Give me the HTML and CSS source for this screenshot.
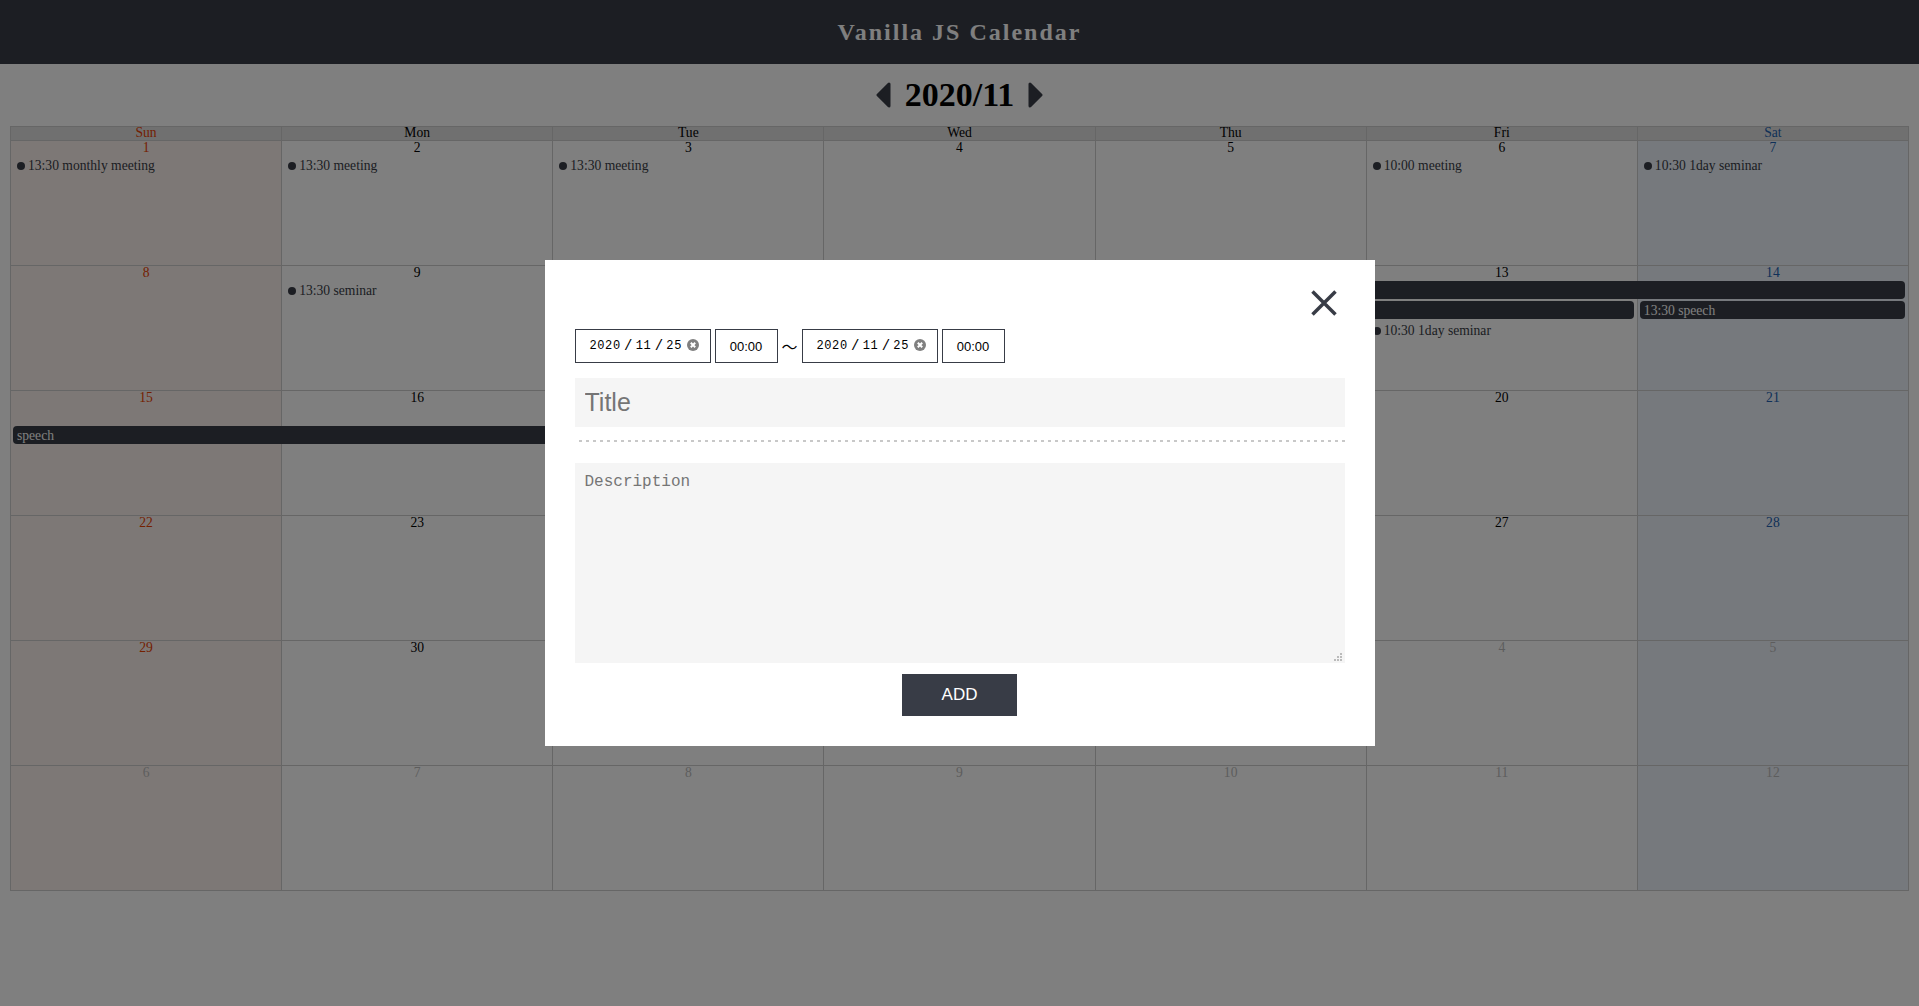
FILE: index.html
```html
<!DOCTYPE html>
<html>
<head>
<meta charset="utf-8"/>
<title>Vanilla JS Calendar</title>
<link rel="stylesheet" href="styles.css">
</head>
<body>

<header class="top"><h1>Vanilla JS Calendar</h1></header>

<div class="month-nav">
  <svg class="arrow" width="15" height="26" viewBox="0 0 15 26"><path d="M13 2 V24 L2 13 Z"/></svg>
  <h2>2020/11</h2>
  <svg class="arrow" width="15" height="26" viewBox="0 0 15 26"><path d="M2 2 V24 L13 13 Z"/></svg>
</div>

<div class="calendar">
  <div class="weekdays">
    <div class="sun">Sun</div><div>Mon</div><div>Tue</div><div>Wed</div><div>Thu</div><div>Fri</div><div class="sat">Sat</div>
  </div>

  <div class="week">
    <div class="day c1 sun">1</div><div class="day c2">2</div><div class="day c3">3</div><div class="day c4">4</div><div class="day c5">5</div><div class="day c6">6</div><div class="day c7 sat">7</div>
    <div class="event c1 s0"><i></i>13:30 monthly meeting</div>
    <div class="event c2 s0"><i></i>13:30 meeting</div>
    <div class="event c3 s0"><i></i>13:30 meeting</div>
    <div class="event c6 s0"><i></i>10:00 meeting</div>
    <div class="event c7 s0"><i></i>10:30 1day seminar</div>
  </div>

  <div class="week">
    <div class="day c1 sun">8</div><div class="day c2">9</div><div class="day c3">10</div><div class="day c4">11</div><div class="day c5">12</div><div class="day c6">13</div><div class="day c7 sat">14</div>
    <div class="event c2 s0"><i></i>13:30 seminar</div>
    <div class="bar c4-7 s0">speech</div>
    <div class="bar c4-6 s1">speech</div>
    <div class="bar c7 s1">13:30 speech</div>
    <div class="event c6 s2"><i></i>10:30 1day seminar</div>
  </div>

  <div class="week">
    <div class="day c1 sun">15</div><div class="day c2">16</div><div class="day c3">17</div><div class="day c4">18</div><div class="day c5">19</div><div class="day c6">20</div><div class="day c7 sat">21</div>
    <div class="bar c1-4 s1">speech</div>
  </div>

  <div class="week">
    <div class="day c1 sun">22</div><div class="day c2">23</div><div class="day c3">24</div><div class="day c4">25</div><div class="day c5">26</div><div class="day c6">27</div><div class="day c7 sat">28</div>
  </div>

  <div class="week">
    <div class="day c1 sun">29</div><div class="day c2">30</div><div class="day c3 other">1</div><div class="day c4 other">2</div><div class="day c5 other">3</div><div class="day c6 other">4</div><div class="day c7 sat other">5</div>
  </div>

  <div class="week">
    <div class="day c1 sun other">6</div><div class="day c2 other">7</div><div class="day c3 other">8</div><div class="day c4 other">9</div><div class="day c5 other">10</div><div class="day c6 other">11</div><div class="day c7 sat other">12</div>
  </div>
</div>

<div class="overlay">
  <form class="modal">
    <svg class="close" width="26" height="26" viewBox="0 0 26 26"><path d="M1.5 1.5 L24.5 24.5 M24.5 1.5 L1.5 24.5"/></svg>

    <div class="when">
      <div class="date"><span>2020</span><b>/</b><span>11</span><b>/</b><span>25</span>
        <svg width="12" height="12" viewBox="0 0 12 12"><circle cx="6" cy="6" r="6"/><path d="M3.8 3.8 L8.2 8.2 M8.2 3.8 L3.8 8.2"/></svg>
      </div>
      <input class="time" type="text" value="00:00">
      <span class="tilde">〜</span>
      <div class="date"><span>2020</span><b>/</b><span>11</span><b>/</b><span>25</span>
        <svg width="12" height="12" viewBox="0 0 12 12"><circle cx="6" cy="6" r="6"/><path d="M3.8 3.8 L8.2 8.2 M8.2 3.8 L3.8 8.2"/></svg>
      </div>
      <input class="time" type="text" value="00:00">
    </div>

    <input class="title" type="text" placeholder="Title">
    <hr/>
    <div class="desc-wrap">
      <textarea class="desc" placeholder="Description"></textarea>
      <svg class="grip" width="8" height="8" viewBox="0 0 8 8"><path d="M6 0h2v2h-2z M3 3h2v2h-2z M6 3h2v2h-2z M0 6h2v2h-2z M3 6h2v2h-2z M6 6h2v2h-2z"/></svg>
    </div>
    <button class="add" type="button">ADD</button>
  </form>
</div>

</body>
</html>
```

FILE: styles.css
```css
* {
   box-sizing: border-box;
}

body {
   margin: 0;
   background-color: white;
   font-family: "Liberation Serif", serif;
   font-size: 13.6px;
   color: black;
}

.top {
   height: 64px;
   background-color: #383c46;
   display: flex;
   align-items: center;
   justify-content: center;
}

.top h1 {
   margin: 0;
   font-size: 24px;
   letter-spacing: 2px;
   color: white;
}

.month-nav {
   height: 62px;
   display: flex;
   align-items: center;
   justify-content: center;
   gap: 14px;
}

.month-nav h2 {
   margin: 0;
   font-size: 34px;
}

.arrow path {
   fill: #383c46;
   stroke: #383c46;
   stroke-width: 3;
   stroke-linejoin: round;
}

.calendar {
   margin: 0 10px;
   border-left: 1px solid #ccc;
   border-top: 1px solid #ccc;
}

.weekdays {
   display: grid;
   grid-template-columns: repeat(7, 1fr);
   height: 14px;
   background-color: #e0e0e0;
   line-height: 12px;
   text-align: center;
}

.weekdays div {
   border-right: 1px solid #ccc;
   border-bottom: 1px solid #ccc;
}

.week {
   display: grid;
   grid-template-columns: repeat(7, 1fr);
   grid-template-rows: 15px repeat(5, 20px) 10px;
   height: 125px;
}

.day {
   grid-row: 1 / -1;
   border-right: 1px solid #ccc;
   border-bottom: 1px solid #ccc;
   line-height: 13px;
   text-align: center;
}

.sun { color: #e84000; }
.sat { color: #2060b0; }
.day.sun { background-color: #fbf1ed; }
.day.sat { background-color: #ecf2fa; }
.day.other { color: #bbb; }

.c1 { grid-column: 1; }
.c2 { grid-column: 2; }
.c3 { grid-column: 3; }
.c4 { grid-column: 4; }
.c5 { grid-column: 5; }
.c6 { grid-column: 6; }
.c7 { grid-column: 7; }
.c1-4 { grid-column: 1 / 5; }
.c4-6 { grid-column: 4 / 7; }
.c4-7 { grid-column: 4 / 8; }

.s0 { grid-row: 2; }
.s1 { grid-row: 3; }
.s2 { grid-row: 4; }

.event {
   padding-left: 6px;
   line-height: 20px;
   color: #383c46;
   white-space: nowrap;
}

.event i {
   display: inline-block;
   width: 8px;
   height: 8px;
   margin-right: 3px;
   border-radius: 50%;
   background-color: #383c46;
}

.bar {
   height: 18px;
   margin: 0 4px 0 2px;
   padding-left: 4px;
   border-radius: 4px;
   background-color: #383c46;
   color: white;
   line-height: 20px;
   white-space: nowrap;
   overflow: hidden;
}

/* add event popup */
.overlay {
   position: fixed;
   top: 0;
   left: 0;
   right: 0;
   bottom: 0;
   display: flex;
   align-items: center;
   justify-content: center;
   background-color: rgba(0, 0, 0, 0.5);
}

.modal {
   position: relative;
   width: 830px;
   height: 486px;
   padding: 69px 30px 0;
   background-color: white;
   display: flex;
   flex-direction: column;
}

.close {
   position: absolute;
   top: 30px;
   right: 38px;
}

.close path {
   fill: none;
   stroke: #383c46;
   stroke-width: 3.5;
}

.when {
   display: flex;
   align-items: center;
   gap: 4px;
   height: 34px;
}

.date {
   display: flex;
   align-items: center;
   width: 136px;
   height: 34px;
   padding-left: 14px;
   border: 1px solid #383c46;
   font-family: "Liberation Mono", monospace;
   font-size: 12px;
   letter-spacing: 0.6px;
}

.date b {
   width: 15px;
   font-weight: normal;
   font-size: 14px;
   letter-spacing: 0;
   text-align: center;
}

.date svg {
   margin: 0 0 2px 5px;
}

.date circle {
   fill: #808080;
}

.date svg path {
   stroke: white;
   stroke-width: 2;
}

.time {
   width: 63px;
   height: 34px;
   padding: 0;
   border: 1px solid #383c46;
   border-radius: 0;
   font-family: "Liberation Sans", sans-serif;
   font-size: 13px;
   text-align: center;
   color: black;
}

.tilde {
   width: 16px;
   font-family: "Noto Sans CJK JP", sans-serif;
   font-size: 16px;
   text-align: center;
}

.title {
   width: 770px;
   height: 49px;
   margin-top: 15px;
   padding: 0 10px;
   border: none;
   background-color: #f5f5f5;
   font-family: "Liberation Sans", sans-serif;
   font-size: 25px;
}

hr {
   width: 770px;
   height: 2px;
   margin: 13px 0 21px;
   border: none;
   background: repeating-linear-gradient(to right, white 0, white 4px, #c8c8c8 4px, #c8c8c8 7px);
}

.desc-wrap {
   position: relative;
   height: 200px;
}

.desc {
   display: block;
   width: 770px;
   height: 200px;
   padding: 10px;
   border: none;
   background-color: #f5f5f5;
   font-family: "Liberation Mono", monospace;
   font-size: 16px;
   outline: none;
   resize: none;
}

.grip {
   position: absolute;
   right: 3px;
   bottom: 2px;
   fill: #bbb;
}

.add {
   align-self: center;
   width: 115px;
   height: 42px;
   margin-top: 11px;
   border: none;
   background-color: #383c46;
   color: white;
   font-family: "Liberation Sans", sans-serif;
   font-size: 17px;
}
```
